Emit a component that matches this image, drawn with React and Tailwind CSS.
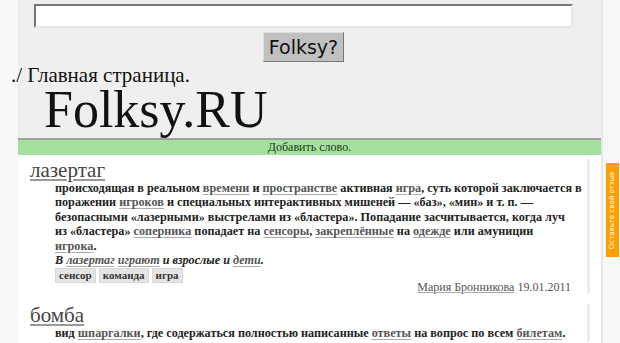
import React from 'react';

const A = ({ children }) => (
  <a href="#" className="text-[#555] underline decoration-[#aaa] underline-offset-2">
    {children}
  </a>
);

const Tag = ({ children }) => (
  <span className="bg-[#e4e4e4] border border-[#d8d8d8] px-[3px] text-[11px] leading-[11px] py-[1px] font-bold text-[#333]">
    {children}
  </span>
);

const Entry = ({ title, children, author, date }) => (
  <div className="mr-[11px] border-r-[3px] border-[#ececec] pl-[12px] pr-[10px]">
    <div className="text-[21px] leading-[22px] text-[#444]">
      <a href="#" className="underline decoration-[#999] underline-offset-2">{title}</a>
    </div>
    <div className="pl-[25px] text-[12.2px] leading-[14.4px] font-bold text-[#222] whitespace-nowrap">
      {children}
    </div>
    {author && (
      <div className="-mt-[2px] text-right pr-[6px] text-[12px] leading-[12px] text-[#555]">
        <a href="#" className="underline decoration-[#aaa]">{author}</a> {date}
      </div>
    )}
  </div>
);

export default function App() {
  return (
    <div className="h-[343px] bg-[#f8f8f8] relative overflow-hidden font-['Liberation_Serif','Times_New_Roman',serif]">
      <div className="ml-[18px] w-[585px] border-r-2 border-[#e6e6e6]">
        {/* header */}
        <div className="bg-[#efefef] h-[140px] border-b-2 border-[#a0a0a0] pt-[4px]">
          <div className="ml-[16px] w-[539px] flex flex-col items-center">
            <div className="w-full h-[24px] bg-white border-2 border-t-[#777] border-l-[#777] border-r-[#e6e6e6] border-b-[#e6e6e6]" />
            <div className="mt-[4px] w-[81px] h-[30px] flex items-center justify-center bg-[#c0c0c0] border border-t-[#ddd] border-l-[#ddd] border-r-[#777] border-b-[#777] text-[19px] text-[#111] font-['DejaVu_Sans',sans-serif]">
              Folksy?
            </div>
          </div>
          <div className="-ml-[7px] mt-[2px] text-[21px] leading-[22px] text-[#111]">./ Главная страница.</div>
          <div className="ml-[26px] text-[52px] leading-[47px] text-[#111]">Folksy.RU</div>
        </div>
        {/* add word bar */}
        <div className="bg-[#a6e0a0] h-[15px] text-center text-[12px] leading-[15px] text-[#1a3a16]">Добавить слово.</div>
        {/* content */}
        <div className="bg-white pt-[4px] pb-[20px]">
          <Entry title="лазертаг" author="Мария Бронникова" date="19.01.2011">
            <div>происходящая в реальном <A>времени</A> и <A>пространстве</A> активная <A>игра</A>, суть которой заключается в</div>
            <div>поражении <A>игроков</A> и специальных интерактивных мишеней — «баз», «мин» и т. п. —</div>
            <div>безопасными «лазерными» выстрелами из «бластера». Попадание засчитывается, когда луч</div>
            <div>из «бластера» <A>соперника</A> попадает на <A>сенсоры</A>, <A>закреплённые</A> на <A>одежде</A> или амуниции</div>
            <div><A>игрока</A>.</div>
            <div className="italic">В <A>лазертаг</A> <A>играют</A> и взрослые и <A>дети</A>.</div>
            <div className="flex gap-[3px] mt-[1px] font-normal">
              <Tag>сенсор</Tag>
              <Tag>команда</Tag>
              <Tag>игра</Tag>
            </div>
          </Entry>
          <div className="h-[11px]" />
          <Entry title="бомба">
            <div>вид <A>шпаргалки</A>, где содержаться полностью написанные <A>ответы</A> на вопрос по всем <A>билетам</A>.</div>
          </Entry>
        </div>
      </div>
      {/* feedback tab */}
      <div className="absolute left-[606px] top-[163px] w-[13px] h-[94px] bg-[#ff9f00] flex items-center justify-center">
        <span className="block whitespace-nowrap text-[7px] leading-[7px] text-white -rotate-90 font-['DejaVu_Sans',sans-serif]">
          Оставьте свой отзыв
        </span>
      </div>
    </div>
  );
}
